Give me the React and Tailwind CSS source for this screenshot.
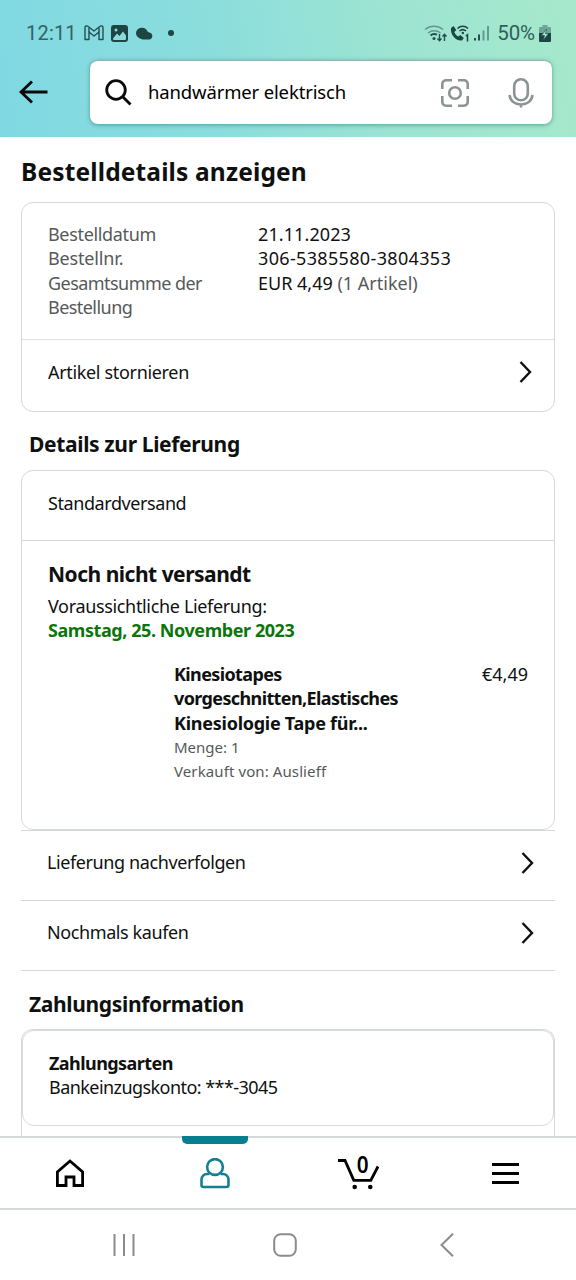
import React from 'react';

const orderRows = [
    { label: 'Bestelldatum', value: '21.11.2023', labelClass: 'tracking-[-0.33px]', valueClass: 'tracking-[0.1px]' },
    { label: 'Bestellnr.', value: '306-5385580-3804353', labelClass: 'tracking-[-0.15px]', valueClass: 'tracking-[0.34px]' },
    { label: 'Gesamtsumme der Bestellung', value: 'EUR 4,49', note: '(1 Artikel)', labelClass: 'tracking-[-0.55px]', valueClass: 'tracking-[0px]' }
];

const Chevron = () => (
    <svg width="14" height="22" viewBox="0 0 14 22" fill="none" stroke="#0f1111" strokeWidth="2.4">
        <path d="M1.500 1l9.500 10L1.500 21" />
    </svg>
);

const StatusBar = () => (
    <div className="flex h-[60px] items-center justify-between pt-[6px] pr-[25px] pl-[26px] text-[#24504f]">
        <div className="flex items-center">
            <span className="w-[58px] font-[Roboto] text-[20px] leading-6 tracking-[0.2px] text-[#356361]">12:11</span>
            <svg width="20" height="16" viewBox="0 0 20 16" fill="none" stroke="currentColor" strokeWidth="1.4" strokeLinejoin="round">
                <path d="M1 14.500V2.500C1 .8 3 .5 4.200 1.500L10 6l5.800-4.500C17 .5 19 .8 19 2.500v12h-4V7l-5 4-5-4v7.500z" />
                <path d="M5 7V2.500M15 7V2.500" />
            </svg>
            <svg className="ml-[7px]" width="17" height="17" viewBox="0 0 17 17">
                <rect width="17" height="17" rx="3" fill="#1c4544" />
                <path d="M2 13.500l4-5 2.500 2.500L12 6.500l3 4v3.500a1 1 0 01-1 1H3a1 1 0 01-1-1z" fill="#8adbdc" />
                <circle cx="5" cy="5" r="1.500" fill="#8adbdc" />
            </svg>
            <svg className="ml-[8px]" width="18" height="13" viewBox="0 0 18 13" fill="#1c4544">
                <path d="M4 11.500C1.500 10.500 0 8.500 0 6a6 6 0 0111.200-2.200c.6 1 .8 1.500 2.300 1.800A3.600 3.600 0 0114 12.500H8c-1.500 0-3-.5-4-1z" />
            </svg>
            <span className="ml-[14px] size-[6px] rounded-full bg-[#1c4544]" />
        </div>
        <div className="flex items-center">
            <svg width="24" height="19" viewBox="0 0 24 19" fill="none" stroke="#24504f" strokeWidth="1.500">
                <path d="M1 5.500a14 14 0 0118 0M4 9a10 10 0 0112.500 0" opacity=".5" />
                <path d="M6.500 11.500a6 6 0 016.500-.8" strokeWidth="2" />
                <circle cx="10" cy="14.500" r="1.500" fill="#24504f" stroke="none" />
                <path d="M15.500 10v6.500M13.500 14.500l2 2.300 2-2.300M20.500 17v-6.500M18.500 12.500l2-2.300 2 2.300" strokeWidth="1.400" />
            </svg>
            <svg className="ml-[2px]" width="21" height="19" viewBox="0 0 21 19" fill="none" stroke="#1c4544" strokeWidth="1.500">
                <path d="M1 4l2.500-2 2.800 4-2 2c.8 2 2.200 3.500 4 4.500l2-1.500 3.500 3-1.800 2.500C6 17.500 0 10.500 1 4z" fill="#1c4544" stroke="none" />
                <path d="M7.500 4.500a7.500 7.500 0 0110.500 0M9.500 7a5 5 0 016.500 0" />
                <circle cx="12.800" cy="9" r="1.200" fill="#1c4544" stroke="none" />
                <path d="M15.800 12l1.700-1.200v6.700" />
            </svg>
            <svg className="ml-[3px]" width="16" height="16" viewBox="0 0 16 16" fill="#24504f">
                <path d="M0 13h2v2.500H0zM4 9.500h2v6H4z" />
                <path d="M8.500 5.500h2v10h-2zM13 1h2v14.500h-2z" opacity=".5" />
            </svg>
            <span className="ml-[7px] font-[Roboto] text-[20.500px] leading-6 tracking-[-0.1px] text-[#2f6059]">50%</span>
            <svg className="ml-[4px]" width="12" height="17" viewBox="0 0 12 17">
                <path d="M3.500 0h5v2H11a1 1 0 011 1v6H0V3a1 1 0 011-1h2.500z" fill="#6fa596" />
                <path d="M0 8h12v8a1 1 0 01-1 1H1a1 1 0 01-1-1z" fill="#1c4544" />
                <path d="M7.500 4L2.500 10.500h3L4.500 15l5-6.500h-3z" fill="#a5e7cc" stroke="#24504f" strokeWidth=".6" />
            </svg>
        </div>
    </div>
);

const SearchHeader = () => (
    <header className="h-[137px] bg-[linear-gradient(80deg,#80d8e3_0%,#8cdedc_40%,#9de4d2_68%,#a5e8cb_100%)]">
        <StatusBar />
        <div className="flex items-center pr-[24px] pl-[19px]">
            <svg className="mr-[42px]" width="29" height="24" viewBox="0 0 29 24" fill="none" stroke="#0a0a0a" strokeWidth="2.900">
                <path d="M28.500 12H2M13 1.500L2 12l11 10.500" />
            </svg>
            <div className="flex h-[64px] flex-1 items-center rounded-[8px] border-t border-[#8fb5b2] bg-white pr-[18px] pl-[15px] shadow-[0_1px_4px_rgba(30,90,90,0.5)]">
                <svg width="27" height="27" viewBox="0 0 27 27" fill="none" stroke="#0a0a0a" strokeWidth="2.800">
                    <circle cx="11" cy="11" r="9.300" />
                    <path d="M17.500 17.500l8 8" />
                </svg>
                <span className="ml-[16px] flex-1 pb-[2px] text-[18.500px] tracking-[-0.15px] text-black">handwärmer elektrisch</span>
                <svg width="28" height="28" viewBox="0 0 28 28" fill="none" stroke="#8b9494" strokeWidth="2.600">
                    <path d="M1.300 10V5a3.700 3.700 0 013.700-3.700h6M17 1.300h6A3.700 3.700 0 0126.700 5v5M26.700 17v6a3.700 3.700 0 01-3.700 3.700h-6M11 26.700H5A3.700 3.700 0 011.300 23v-6" />
                    <circle cx="14" cy="14" r="5.800" />
                </svg>
                <svg className="ml-[39px]" width="26" height="30" viewBox="0 0 26 30" fill="none" stroke="#8b9494" strokeWidth="2.600">
                    <rect x="6.200" y="1.300" width="13.600" height="21" rx="6.800" />
                    <path d="M1.500 17c.8 6 5.500 9.500 11.500 9.500S23.700 23 24.500 17M13 26v3.500" />
                </svg>
            </div>
        </div>
    </header>
);

const OrderSummary = () => (
    <section className="mt-[12px] h-[210px] rounded-[12px] border border-[#d5d9d9]">
        <div className="flex h-[137px] flex-col border-b border-[#dfe2e2] pt-[19px] pl-[26px] leading-[24.300px]">
            {orderRows.map((row) => (
                <div key={row.label} className="flex">
                    <span className={`w-[210px] pr-[40px] text-[#565959] ${row.labelClass}`}>{row.label}</span>
                    <span className={row.valueClass}>
                        {row.value}
                        {row.note && <span className="text-[#565959]"> {row.note}</span>}
                    </span>
                </div>
            ))}
        </div>
        <div className="flex h-[66px] items-center justify-between pr-[21px] pb-[2px] pl-[26px]">
            <span className="tracking-[-0.33px]">Artikel stornieren</span>
            <Chevron />
        </div>
    </section>
);

const DeliveryDetails = () => (
    <section className="mt-[11px] h-[360px] rounded-[12px] border border-[#d5d9d9]">
        <div className="flex h-[70px] items-center border-b border-[#d5d9d9] pb-[4px] pl-[26px] tracking-[-0.42px]">Standardversand</div>
        <div className="pt-[18px] pr-[26px] pl-[26px]">
            <h3 className="text-[21px] leading-[30px] font-bold tracking-[-0.5px]">Noch nicht versandt</h3>
            <p className="mt-[5px] leading-[24px] tracking-[-0.34px]">Voraussichtliche Lieferung:</p>
            <p className="leading-[25px] font-bold tracking-[-0.43px] text-[#0c750c]">Samstag, 25. November 2023</p>
            <div className="mt-[19px] flex pl-[126px]">
                <div className="flex-1">
                    <p className="w-[250px] leading-[24.300px] font-bold tracking-[-0.62px]">
                        Kinesiotapes<br />vorgeschnitten,Elastisches<br />
                        <span className="tracking-[-0.26px]">Kinesiologie Tape für...</span>
                    </p>
                    <p className="text-[15px] leading-[24.500px] text-[#565959]">Menge: 1</p>
                    <p className="text-[15px] leading-[24.500px] tracking-[0.1px] text-[#565959]">Verkauft von: Auslieff</p>
                </div>
                <span className="leading-[24.300px]">€4,49</span>
            </div>
        </div>
    </section>
);

const ActionRow = ({ label }) => (
    <div className="flex h-[70px] items-center justify-between border-b border-[#d5d9d9] pr-[20px] pb-[6px] pl-[26px] tracking-[-0.4px]">
        <span>{label}</span>
        <Chevron />
    </div>
);

const PaymentInfo = () => (
    <section className="mt-[10px] h-[107px] rounded-t-[12px] border border-b-0 border-[#d5d9d9]">
        <div className="h-[96px] rounded-[12px] border border-[#d9dcdc] pt-[20px] pl-[26px] leading-[24.300px] tracking-[-0.56px]">
            <p className="font-bold">Zahlungsarten</p>
            <p>Bankeinzugskonto: ***-3045</p>
        </div>
    </section>
);

const TabBar = () => (
    <nav className="flex h-[74px] border-y-2 border-[#d5d9d9] bg-white">
        <div className="flex w-[140px] items-center justify-center">
            <svg width="28" height="28" viewBox="0 0 28 28" fill="none" stroke="#000" strokeWidth="2.800">
                <path d="M14 2L1.400 13v13.500H10V18h8v8.500h8.600V13z" />
            </svg>
        </div>
        <div className="-mt-[2px] flex w-[150px] flex-col items-center">
            <span className="h-[8px] w-[66px] rounded-b-[5px] bg-[#06808f]" />
            <svg className="mt-[14px]" width="30" height="31" viewBox="0 0 30 31" fill="none" stroke="#138091" strokeWidth="2.600">
                <circle cx="15" cy="9" r="7.900" />
                <path d="M9.500 16H7a5.500 5.500 0 00-5.500 5.500v5.500a2 2 0 002 2h23a2 2 0 002-2v-5.500A5.500 5.500 0 0023 16h-2.500" />
            </svg>
        </div>
        <div className="relative flex w-[138px] items-center justify-center pt-[2px]">
            <svg width="42" height="32" viewBox="0 0 42 32" fill="none" stroke="#000" strokeWidth="2.800">
                <path d="M0 2.500h7L15.800 22.300h17L40 8.500" />
                <circle cx="16.700" cy="29" r="2.300" fill="#000" stroke="none" />
                <circle cx="32.300" cy="29" r="2.300" fill="#000" stroke="none" />
            </svg>
            <span className="absolute top-[13px] left-[66px] scale-x-90 text-[23px] leading-[26px] font-semibold text-black">0</span>
        </div>
        <div className="flex flex-1 flex-col items-center justify-center gap-[6px] pl-[7px]">
            <span className="h-[3px] w-[27px] bg-black" />
            <span className="h-[3px] w-[27px] bg-black" />
            <span className="h-[3px] w-[27px] bg-black" />
        </div>
    </nav>
);

const SystemNav = () => (
    <div className="flex h-[70px] items-center pl-[113px] text-[#8c8c8c]">
        <svg width="22" height="24" viewBox="0 0 22 24" stroke="currentColor" strokeWidth="2">
            <path d="M1.500 1v22M11 1v22M20.500 1v22" />
        </svg>
        <svg className="ml-[138px]" width="24" height="24" viewBox="0 0 24 24" fill="none" stroke="currentColor" strokeWidth="2">
            <rect x="1.200" y="1.200" width="21.600" height="21.600" rx="6.500" />
        </svg>
        <svg className="ml-[143px]" width="14" height="24" viewBox="0 0 14 24" fill="none" stroke="currentColor" strokeWidth="2">
            <path d="M13 .7L1.500 12 13 23.300" />
        </svg>
    </div>
);

const App = () => {
    return (
        <div className="flex h-[1280px] w-[576px] flex-col overflow-hidden bg-white font-['Noto_Sans',sans-serif] text-[18px] text-[#0f1111]">
            <SearchHeader />
            <main className="h-[999px] overflow-hidden px-[21px]">
                <h1 className="mt-[17px] text-[24.500px] leading-[36px] font-bold tracking-[0.15px]">Bestelldetails anzeigen</h1>
                <OrderSummary />
                <h2 className="mt-[17px] pl-[8px] text-[21px] leading-[30px] font-bold tracking-[-0.35px]">Details zur Lieferung</h2>
                <DeliveryDetails />
                <div className="border-t border-[#d5d9d9]">
                    <ActionRow label="Lieferung nachverfolgen" />
                    <ActionRow label="Nochmals kaufen" />
                </div>
                <h2 className="mt-[18px] pl-[8px] text-[21px] leading-[30px] font-bold tracking-[-0.35px]">Zahlungsinformation</h2>
                <PaymentInfo />
            </main>
            <TabBar />
            <SystemNav />
        </div>
    );
};

export default App;
